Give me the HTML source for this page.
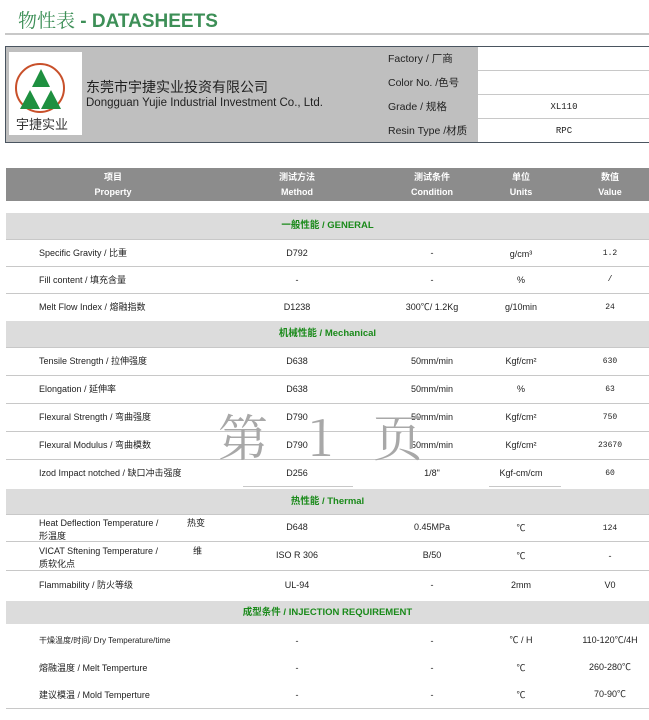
<!DOCTYPE html>
<html><head><meta charset="utf-8">
<style>
*{margin:0;padding:0;box-sizing:border-box}
body{width:649px;height:720px;background:#fff;position:relative;overflow:hidden;font-family:"Liberation Sans","Noto Sans CJK SC",sans-serif;color:#222}
.a{position:absolute}
.t{position:absolute;font-size:9px;white-space:nowrap;line-height:12px}
.c{position:absolute;width:140px;text-align:center;font-size:9px;white-space:nowrap;line-height:12px}
.line{position:absolute;left:6px;right:0;height:1px;background:#c8c8c8}
.sec{position:absolute;left:6px;right:0;background:#dcdcdc;color:#1a8a1a;font-weight:bold;font-size:9.5px;text-align:center}
.v{font-family:"Liberation Mono",monospace;font-size:8px}
</style></head><body>
<div class="a" style="left:18px;top:8px;font-size:19px;color:#3d8f57;font-weight:bold;line-height:24px"><span style="font-family:'Noto Serif CJK SC',serif;font-weight:normal">物性表</span> - DATASHEETS</div>
<div class="a" style="left:5px;top:33px;width:644px;height:2px;background:#c8c8c8"></div>

<div class="a" style="left:5px;top:46px;width:650px;height:97px;border:1px solid #4a5560;background:#bfbfbf"></div>
<div class="a" style="left:478px;top:47px;width:171px;height:95px;background:#fff"></div>
<div class="a" style="left:478px;top:70px;width:171px;height:1px;background:#c8c8c8"></div>
<div class="a" style="left:478px;top:94px;width:171px;height:1px;background:#c8c8c8"></div>
<div class="a" style="left:478px;top:118px;width:171px;height:1px;background:#c8c8c8"></div>
<div class="a" style="left:9px;top:52px;width:73px;height:83px;background:#fff"></div>
<svg class="a" style="left:9px;top:52px" width="73" height="83">
<circle cx="31" cy="36" r="24" fill="none" stroke="#c8502a" stroke-width="2"/>
<polygon points="32,17 23,35 41,35" fill="#1e9040"/>
<polygon points="21,38 11,57 31,57" fill="#1e9040"/>
<polygon points="42,38 32,57 52,57" fill="#1e9040"/>
</svg>
<div class="a" style="left:16px;top:117px;font-size:13px;line-height:16px;color:#333">宇捷实业</div>
<div class="a" style="left:86px;top:79px;font-size:14px;line-height:17px;color:#222">东莞市宇捷实业投资有限公司</div>
<div class="a" style="left:86px;top:96px;font-size:11.5px;line-height:14px;color:#222">Dongguan Yujie Industrial Investment Co., Ltd.</div>
<div class="t" style="left:388px;top:53px;font-size:10.5px">Factory / 厂商</div>
<div class="t" style="left:388px;top:77px;font-size:10.5px">Color No. /色号</div>
<div class="t" style="left:388px;top:101px;font-size:10.5px">Grade / 规格</div>
<div class="t" style="left:388px;top:125px;font-size:10.5px">Resin Type /材质</div>
<div class="c v" style="left:494px;top:101px;font-size:9px">XL110</div>
<div class="c v" style="left:494px;top:125px;font-size:9px">RPC</div>

<div class="a" style="left:6px;top:168px;width:643px;height:33px;background:#8c8c8c;color:#fff;font-weight:bold;font-size:9px">
<div class="c" style="left:37px;top:2px;line-height:15px">项目<br>Property</div>
<div class="c" style="left:221px;top:2px;line-height:15px">测试方法<br>Method</div>
<div class="c" style="left:356px;top:2px;line-height:15px">测试条件<br>Condition</div>
<div class="c" style="left:445px;top:2px;line-height:15px">单位<br>Units</div>
<div class="c" style="left:534px;top:2px;line-height:15px">数值<br>Value</div>
</div>

<div class="sec" style="top:213px;height:26px;line-height:26px">一般性能 / GENERAL</div>
<div class="line" style="top:239px"></div>
<div class="t" style="left:39px;top:247px">Specific Gravity / 比重</div><div class="c" style="left:227px;top:247px">D792</div><div class="c" style="left:362px;top:247px">-</div><div class="c" style="left:451px;top:248px">g/cm³</div><div class="c v" style="left:540px;top:248px">1.2</div>
<div class="line" style="top:266px"></div>
<div class="t" style="left:39px;top:274px">Fill content / 填充含量</div><div class="c" style="left:227px;top:274px">-</div><div class="c" style="left:362px;top:274px">-</div><div class="c" style="left:451px;top:274px">%</div><div class="c v" style="left:540px;top:274px">/</div>
<div class="line" style="top:293px"></div>
<div class="t" style="left:39px;top:301px">Melt Flow Index / 熔融指数</div><div class="c" style="left:227px;top:301px">D1238</div><div class="c" style="left:362px;top:301px">300℃/ 1.2Kg</div><div class="c" style="left:451px;top:301px">g/10min</div><div class="c v" style="left:540px;top:302px">24</div>

<div class="sec" style="top:321px;height:26px;line-height:26px">机械性能 / Mechanical</div>
<div class="line" style="top:347px"></div>
<div class="t" style="left:39px;top:355px">Tensile Strength / 拉伸强度</div><div class="c" style="left:227px;top:355px">D638</div><div class="c" style="left:362px;top:355px">50mm/min</div><div class="c" style="left:451px;top:355px">Kgf/cm²</div><div class="c v" style="left:540px;top:356px">630</div>
<div class="line" style="top:375px"></div>
<div class="t" style="left:39px;top:383px">Elongation / 延伸率</div><div class="c" style="left:227px;top:383px">D638</div><div class="c" style="left:362px;top:383px">50mm/min</div><div class="c" style="left:451px;top:383px">%</div><div class="c v" style="left:540px;top:384px">63</div>
<div class="line" style="top:403px"></div>
<div class="t" style="left:39px;top:411px">Flexural Strength / 弯曲强度</div><div class="c" style="left:227px;top:411px">D790</div><div class="c" style="left:362px;top:411px">50mm/min</div><div class="c" style="left:451px;top:411px">Kgf/cm²</div><div class="c v" style="left:540px;top:412px">750</div>
<div class="line" style="top:431px"></div>
<div class="t" style="left:39px;top:439px">Flexural Modulus / 弯曲模数</div><div class="c" style="left:227px;top:439px">D790</div><div class="c" style="left:362px;top:439px">50mm/min</div><div class="c" style="left:451px;top:439px">Kgf/cm²</div><div class="c v" style="left:540px;top:440px">23670</div>
<div class="line" style="top:459px"></div>
<div class="t" style="left:39px;top:467px">Izod Impact notched / 缺口冲击强度</div><div class="c" style="left:227px;top:467px">D256</div><div class="c" style="left:362px;top:467px">1/8"</div><div class="c" style="left:451px;top:467px">Kgf-cm/cm</div><div class="c v" style="left:540px;top:468px">60</div>
<div class="a" style="left:243px;top:486px;width:110px;height:1px;background:#c8c8c8"></div>
<div class="a" style="left:489px;top:486px;width:72px;height:1px;background:#c8c8c8"></div>
<div class="a" style="left:218px;top:405px;font-size:50px;color:#a8a8a8;font-family:'Noto Serif CJK SC',serif;letter-spacing:14px;line-height:60px">第 1 页</div>

<div class="sec" style="top:489px;height:25px;line-height:25px">热性能 / Thermal</div>
<div class="line" style="top:514px"></div>
<div class="t" style="left:39px;top:517px;line-height:13px">Heat Deflection Temperature /<br>形温度</div><div class="t" style="left:187px;top:517px">热变</div>
<div class="c" style="left:227px;top:521px">D648</div><div class="c" style="left:362px;top:521px">0.45MPa</div><div class="c" style="left:451px;top:522px">℃</div><div class="c v" style="left:540px;top:523px">124</div>
<div class="line" style="top:541px"></div>
<div class="t" style="left:39px;top:545px;line-height:13px">VICAT Sftening Temperature /<br>质软化点</div><div class="t" style="left:193px;top:545px">维</div>
<div class="c" style="left:227px;top:549px">ISO R 306</div><div class="c" style="left:362px;top:549px">B/50</div><div class="c" style="left:451px;top:550px">℃</div><div class="c" style="left:540px;top:550px">-</div>
<div class="line" style="top:570px"></div>
<div class="t" style="left:39px;top:579px">Flammability / 防火等级</div><div class="c" style="left:227px;top:579px">UL-94</div><div class="c" style="left:362px;top:579px">-</div><div class="c" style="left:451px;top:579px">2mm</div><div class="c" style="left:540px;top:579px">V0</div>

<div class="sec" style="top:601px;height:23px;line-height:23px">成型条件 / INJECTION REQUIREMENT</div>
<div class="t" style="left:39px;top:635px;font-size:8px">干燥温度/时间/ Dry Temperature/time</div><div class="c" style="left:227px;top:635px">-</div><div class="c" style="left:362px;top:635px">-</div><div class="c" style="left:451px;top:634px">℃ /  H</div><div class="c" style="left:540px;top:634px">110-120℃/4H</div>
<div class="t" style="left:39px;top:662px">熔融温度 / Melt Temperture</div><div class="c" style="left:227px;top:662px">-</div><div class="c" style="left:362px;top:662px">-</div><div class="c" style="left:451px;top:662px">℃</div><div class="c" style="left:540px;top:661px">260-280℃</div>
<div class="t" style="left:39px;top:689px">建议模温 / Mold Temperture</div><div class="c" style="left:227px;top:689px">-</div><div class="c" style="left:362px;top:689px">-</div><div class="c" style="left:451px;top:689px">℃</div><div class="c" style="left:540px;top:688px">70-90℃</div>
<div class="line" style="top:708px"></div>
</body></html>
